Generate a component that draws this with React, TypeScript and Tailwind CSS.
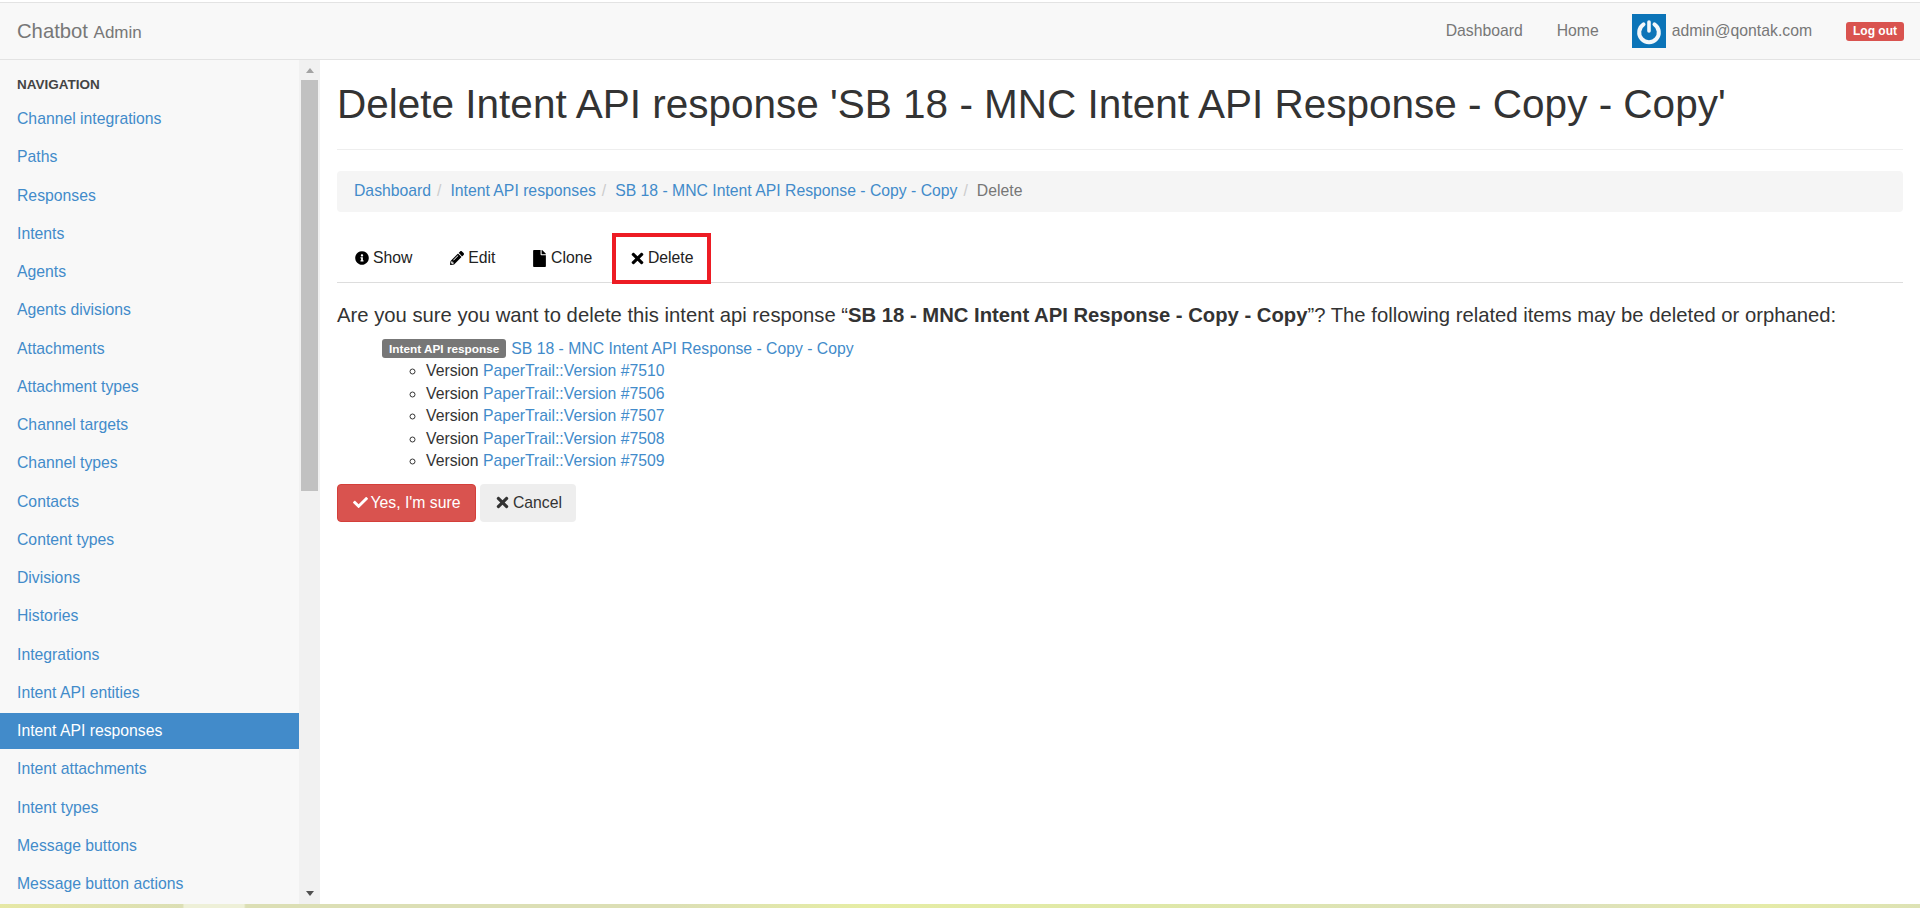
import { FaCheck, FaFile, FaInfoCircle, FaPencilAlt, FaTimes } from "react-icons/fa";

const navItems = [
  "Channel integrations",
  "Paths",
  "Responses",
  "Intents",
  "Agents",
  "Agents divisions",
  "Attachments",
  "Attachment types",
  "Channel targets",
  "Channel types",
  "Contacts",
  "Content types",
  "Divisions",
  "Histories",
  "Integrations",
  "Intent API entities",
  "Intent API responses",
  "Intent attachments",
  "Intent types",
  "Message buttons",
  "Message button actions",
];

const versions = ["7510", "7506", "7507", "7508", "7509"];

const title = "SB 18 - MNC Intent API Response - Copy - Copy";

function PowerLogo() {
  return (
    <svg viewBox="0 0 34 34" className="h-[34px] w-[34px]" aria-hidden="true">
      <rect width="34" height="34" fill="#0b74b8" />
      <path
        d="M11.5 10.3a9.8 9.8 0 1 0 11 0"
        fill="none"
        stroke="#f2f7fa"
        strokeWidth="4"
        strokeLinecap="round"
      />
      <path d="M17 8v9" stroke="#f2f7fa" strokeWidth="3.6" strokeLinecap="round" />
    </svg>
  );
}

function Navbar() {
  return (
    <header className="flex h-[58px] shrink-0 items-center justify-between border-y border-[#e3e3e3] bg-[#f8f8f8] pl-[17px] pr-[16px] text-[#777]">
      <div className="text-[20.25px]">
        Chatbot <small className="text-[17px]">Admin</small>
      </div>
      <nav className="flex items-center">
        <span>Dashboard</span>
        <span className="ml-[34px]">Home</span>
        <span className="ml-[33px] flex items-center gap-[6px]">
          <PowerLogo />
          admin@qontak.com
        </span>
        <span className="ml-[34px] rounded-[3px] bg-[#d9534f] px-[7px] py-[3.5px] text-[12px] font-bold leading-[12px] text-white">
          Log out
        </span>
      </nav>
    </header>
  );
}

function Sidebar() {
  return (
    <aside className="flex w-[320px] shrink-0 overflow-hidden">
      <div className="w-[299px] overflow-hidden bg-[#f8f8f8] pt-[16px]">
        <h2 className="mb-[7px] px-[17px] text-[13.5px] font-bold uppercase leading-[18px] text-[#444]">
          Navigation
        </h2>
        <ul>
          {navItems.map((item) => (
            <li
              key={item}
              className={
                item === "Intent API responses"
                  ? "mb-[2.25px] flex h-[36px] items-center bg-[#428bca] px-[17px] text-white"
                  : "mb-[2.25px] flex h-[36px] items-center px-[17px] text-[#428bca]"
              }
            >
              {item}
            </li>
          ))}
        </ul>
      </div>
      <div className="flex w-[21px] flex-col items-center bg-[#f1f1f1]">
        <div className="mt-[8px] h-0 w-0 border-x-[4.5px] border-b-[5px] border-x-transparent border-b-[#a3a3a3]" />
        <div className="mt-[7px] h-[411px] w-[17px] bg-[#c1c1c1]" />
        <div className="mb-[8px] mt-auto h-0 w-0 border-x-[4.5px] border-t-[5px] border-x-transparent border-t-[#505050]" />
      </div>
    </aside>
  );
}

function Tab({ icon, label, active }: { icon: React.ReactNode; label: string; active?: boolean }) {
  return (
    <div
      className={
        active
          ? "relative mr-[2.25px] flex h-[48px] items-center px-[17.5px] text-[#222]"
          : "mr-[2.25px] flex h-[48px] items-center px-[17.5px] text-[#222]"
      }
    >
      <span className="flex w-[18.5px] items-center">{icon}</span>
      {label}
      {active ? (
        <span className="absolute -bottom-[2px] -top-[1px] left-0 right-0 border-4 border-[#ed1c24]" />
      ) : null}
    </div>
  );
}

function Content() {
  return (
    <main className="min-w-0 flex-1 px-[17px] text-[#333]">
      <h1 className="border-b border-[#eee] pb-[22px] pt-[22px] text-[40.5px] leading-[45px]">
        Delete Intent API response '{title}'
      </h1>
      <div className="mt-[21px] flex h-[41px] items-center rounded-[4px] bg-[#f5f5f5] px-[17px] pb-[2px]">
        <span className="text-[#428bca]">Dashboard</span>
        <span className="px-[6px] text-[#ccc]">/</span>
        <span className="ml-[3px] text-[#428bca]">Intent API responses</span>
        <span className="px-[6px] text-[#ccc]">/</span>
        <span className="ml-[3px] text-[#428bca]">{title}</span>
        <span className="px-[6px] text-[#ccc]">/</span>
        <span className="ml-[3px] text-[#777]">Delete</span>
      </div>
      <div className="mt-[22px] flex border-b border-[#ddd]">
        <Tab icon={<FaInfoCircle className="size-[14px] text-black" />} label="Show" />
        <Tab icon={<FaPencilAlt className="size-[14px] text-black" />} label="Edit" />
        <Tab icon={<FaFile className="-ml-[2px] size-[17px] text-black" />} label="Clone" />
        <Tab icon={<FaTimes className="size-[17px] text-black" />} label="Delete" active />
      </div>
      <p className="mt-[18px] text-[20.25px] leading-[28px]">
        Are you sure you want to delete this intent api response “<strong>{title}</strong>”? The
        following related items may be deleted or orphaned:
      </p>
      <div className="mt-[8px] pl-[45px]">
        <div className="flex h-[23px] items-center">
          <span className="rounded-[3px] bg-[#777] px-[7px] py-[3.5px] text-[11.8px] font-bold leading-[12px] text-white">
            Intent API response
          </span>
          <span className="ml-[5px] text-[#428bca]">{title}</span>
        </div>
        <ul className="list-[circle] pl-[44px]">
          {versions.map((version) => (
            <li key={version} className="leading-[22.5px]">
              Version <span className="text-[#428bca]">PaperTrail::Version #{version}</span>
            </li>
          ))}
        </ul>
      </div>
      <div className="mt-[11px] flex gap-[4px]">
        <div className="flex h-[38px] items-center gap-[3px] rounded-[4px] border border-[#d43f3a] bg-[#d9534f] px-[14.5px] text-white">
          <FaCheck className="size-[15px]" />
          Yes, I'm sure
        </div>
        <div className="flex h-[38px] items-center gap-[2px] rounded-[4px] bg-[#eee] px-[14px]">
          <FaTimes className="size-[17px]" />
          Cancel
        </div>
      </div>
    </main>
  );
}

export default function App() {
  return (
    <div className="flex h-[908px] flex-col overflow-hidden bg-white font-['Liberation_Sans',Arial,sans-serif] text-[15.75px]">
      <div className="h-[2px] shrink-0 bg-white" />
      <Navbar />
      <div className="flex min-h-0 flex-1">
        <Sidebar />
        <Content />
      </div>
      <div className="h-[4px] shrink-0 bg-[linear-gradient(90deg,#e6e8a5_0%,#dcdfb5_9.5%,#eef0d8_9.6%,#eef0d8_12.7%,#dcdfb5_12.8%,#dcdfb5_35%,#e6eda5_45%,#dfe8a8_60%,#dcdfc0_80%,#e5eba8_92%,#dde2b5_100%)]" />
    </div>
  );
}
